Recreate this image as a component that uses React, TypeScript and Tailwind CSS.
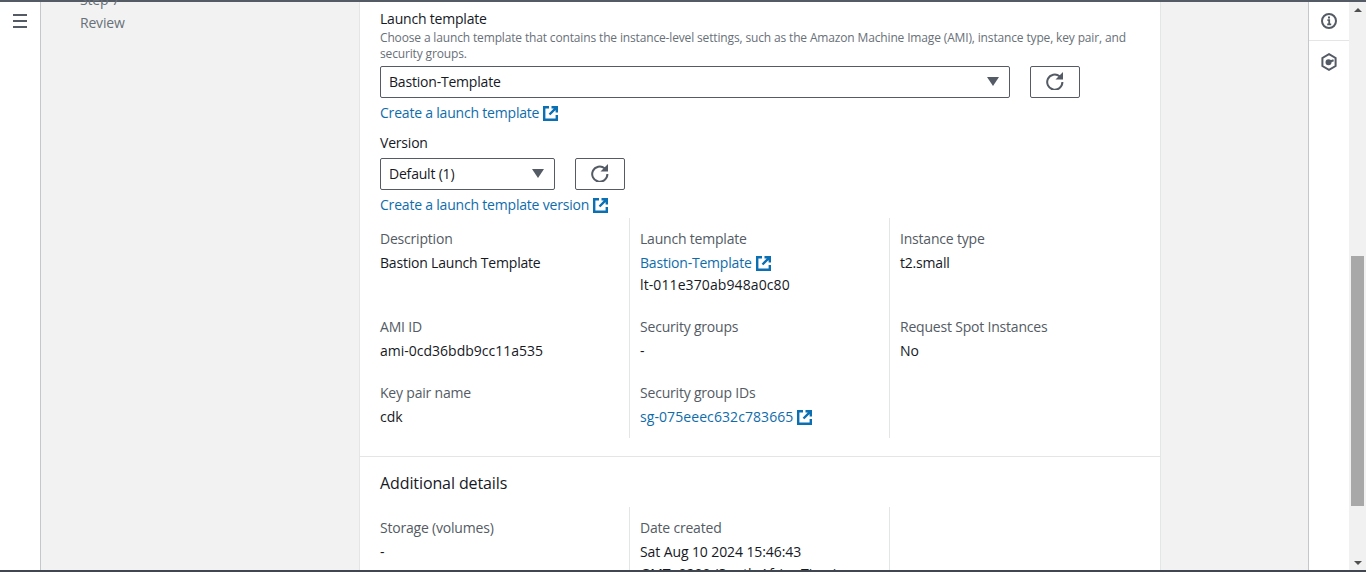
const FONT = "font-['Open_Sans','Noto_Sans',sans-serif]"

function ExternalIcon() {
  return (
    <svg width="15" height="15" viewBox="0 0 15 15" fill="none" stroke="#0b6fb3" strokeWidth="2.4" className="shrink-0">
      <path d="M6 1.2H1.2v12.6h12.6V9" />
      <path d="M8.5 1.2h5.3v5.3M13.8 1.2 6.5 8.5" />
    </svg>
  )
}

function RefreshIcon() {
  return (
    <svg width="18" height="19" viewBox="0 0 18 19" fill="none" className="mt-[-3px]">
      <path d="M13.6 5.2A7.6 7.6 0 1 0 16.4 11" stroke="#545b64" strokeWidth="2" />
      <path d="M17 1v7.5H9.5z" fill="#545b64" />
    </svg>
  )
}

function ExtLink({ children, className = '', tracking = 'tracking-[-0.2px]' }: { children: string; className?: string; tracking?: string }) {
  return (
    <a className={`flex items-center gap-[4px] text-[14px] leading-[20px] text-[#0f6cab] ${tracking} ${className}`}>
      {children}
      <ExternalIcon />
    </a>
  )
}

function Select({ value, className }: { value: string; className: string }) {
  return (
    <div className={`flex h-[32px] items-center justify-between rounded-[2px] border border-[#545b64] pb-[1px] pl-[8px] pr-[10px] text-[14px] tracking-[-0.2px] text-[#16191f] ${className}`}>
      <span>{value}</span>
      <span className="h-0 w-0 border-x-[6px] border-t-[9px] border-x-transparent border-t-[#545b64]" />
    </div>
  )
}

function RefreshButton() {
  return (
    <button className="flex h-[32px] w-[50px] items-center justify-center rounded-[2px] border border-[#545b64]">
      <RefreshIcon />
    </button>
  )
}

function Field({ label, children, className = '' }: { label: string; children: React.ReactNode; className?: string }) {
  return (
    <div className={className}>
      <div className="text-[14px] leading-[20px] tracking-[-0.2px] text-[#545b64]">{label}</div>
      <div className="mt-[4px] text-[14px] leading-[20px] text-[#16191f]">{children}</div>
    </div>
  )
}

export default function App() {
  return (
    <div className={`flex h-[572px] w-[1366px] flex-col overflow-hidden bg-white ${FONT}`}>
      <div className="h-[2px] shrink-0 bg-[#545b64]" />
      <div className="flex min-h-0 flex-1">
        {/* Left nav rail */}
        <div className="flex w-[41px] shrink-0 justify-center border-r border-[#c6c6cd] pt-[12px]">
          <svg width="14" height="14" viewBox="0 0 14 14" fill="#545b64">
            <rect y="0" width="14" height="2" />
            <rect y="6" width="14" height="2" />
            <rect y="12" width="14" height="2" />
          </svg>
        </div>

        {/* Gray column with the wizard steps */}
        <div className="w-[318px] shrink-0 bg-[#f2f2f2] pl-[39px]">
          <div className="mt-[-12px] text-[14px] leading-[20px] tracking-[-0.2px] text-[#687078]">Step 7</div>
          <div className="mt-[3px] text-[14px] leading-[20px] tracking-[-0.2px] text-[#687078]">Review</div>
        </div>

        {/* Card */}
        <div className="w-[802px] shrink-0 border-x border-[#e4e6e6]">
          <div className="px-[20px] pt-[7px] pb-[18px]">
            <div className="text-[14px] leading-[20px] tracking-[-0.2px] text-[#16191f]">Launch template</div>
            <p className="mt-[1px] text-[12px] leading-[16px] tracking-[-0.15px] text-[#687078]">
              Choose a launch template that contains the instance-level settings, such as the Amazon Machine Image (AMI), instance type, key pair, and security groups.
            </p>
            <div className="mt-[4px] flex gap-[20px]">
              <Select value="Bastion-Template" className="w-[630px]" />
              <RefreshButton />
            </div>
            <ExtLink className="mt-[5px]">Create a launch template</ExtLink>
            <div className="mt-[10px] text-[14px] leading-[20px] tracking-[-0.2px] text-[#16191f]">Version</div>
            <div className="mt-[5px] flex gap-[20px]">
              <Select value="Default (1)" className="w-[175px]" />
              <RefreshButton />
            </div>
            <ExtLink className="mt-[5px]">Create a launch template version</ExtLink>

            <div className="mt-[3px] grid grid-cols-[250px_260px_250px]">
              <div className="border-r border-[#e4e6e6] pt-[11px]">
                <Field label="Description"><span className="tracking-[-0.2px]">Bastion Launch Template</span></Field>
                <Field label="AMI ID" className="mt-[44px]">ami-0cd36bdb9cc11a535</Field>
                <Field label="Key pair name" className="mt-[22px]">cdk</Field>
              </div>
              <div className="border-r border-[#e4e6e6] pt-[11px] pb-[11px] pl-[10px]">
                <Field label="Launch template">
                  <ExtLink>Bastion-Template</ExtLink>
                  <div className="mt-[2px] tracking-[0.1px]">lt-011e370ab948a0c80</div>
                </Field>
                <Field label="Security groups" className="mt-[22px]">-</Field>
                <Field label="Security group IDs" className="mt-[22px]">
                  <ExtLink tracking="tracking-[0.08px]">sg-075eeec632c783665</ExtLink>
                </Field>
              </div>
              <div className="pt-[11px] pl-[10px]">
                <Field label="Instance type"><span className="tracking-[-0.2px]">t2.small</span></Field>
                <Field label="Request Spot Instances" className="mt-[44px]">No</Field>
              </div>
            </div>
          </div>

          <div className="border-t border-[#e4e6e6] px-[20px] pt-[15px]">
            <div className="text-[16px] leading-[22px] tracking-[-0.1px] text-[#16191f]">Additional details</div>
            <div className="mt-[13px] grid grid-cols-[250px_260px_250px]">
              <div className="border-r border-[#e4e6e6] pt-[11px]">
                <Field label="Storage (volumes)">-</Field>
              </div>
              <div className="h-[80px] border-r border-[#e4e6e6] pt-[11px] pl-[10px]">
                <Field label="Date created">
                  <div className="tracking-[-0.1px]">Sat Aug 10 2024 15:46:43</div>
                  <div className="mt-[2px]">GMT+0200 (South Africa Time)</div>
                </Field>
              </div>
            </div>
          </div>
        </div>

        {/* Gray gutter */}
        <div className="w-[148px] shrink-0 border-r border-[#c6c6cd] bg-[#f2f2f2]" />

        {/* Right tools rail */}
        <div className="w-[40px] shrink-0">
          <div className="flex h-[39px] items-center justify-center border-b border-[#e4e6e6]">
            <svg width="16" height="16" viewBox="0 0 16 16" fill="none" stroke="#545b64" strokeWidth="2">
              <circle cx="8" cy="8" r="7" />
              <path d="M8 3.4v2.2" />
              <path d="M6.4 7.2H8.2v4.4M6.2 11.4h4" strokeWidth="1.8" />
            </svg>
          </div>
          <div className="flex justify-center pt-[12px]">
            <svg width="16" height="18" viewBox="0 0 16 18" fill="none" stroke="#545b64" strokeWidth="2">
              <path d="M8 1.2 14.6 5v8L8 16.8 1.4 13V5z" />
              <circle cx="7.5" cy="9.3" r="2" fill="#545b64" />
              <path d="M8 9 12.6 7.2" />
            </svg>
          </div>
        </div>

        {/* Browser scrollbar */}
        <div className="flex w-[17px] shrink-0 flex-col items-center bg-[#f1f1f1]">
          <span className="mt-[6px] h-0 w-0 border-x-[4px] border-b-[4px] border-x-transparent border-b-[#505050]" />
          <div className="mt-[244px] h-[250px] w-[13px] bg-[#a8a8a8]" />
          <span className="mt-[55px] h-0 w-0 border-x-[4px] border-t-[4px] border-x-transparent border-t-[#505050]" />
        </div>
      </div>
      <div className="h-[2px] shrink-0 bg-[#414750]" />
    </div>
  )
}
